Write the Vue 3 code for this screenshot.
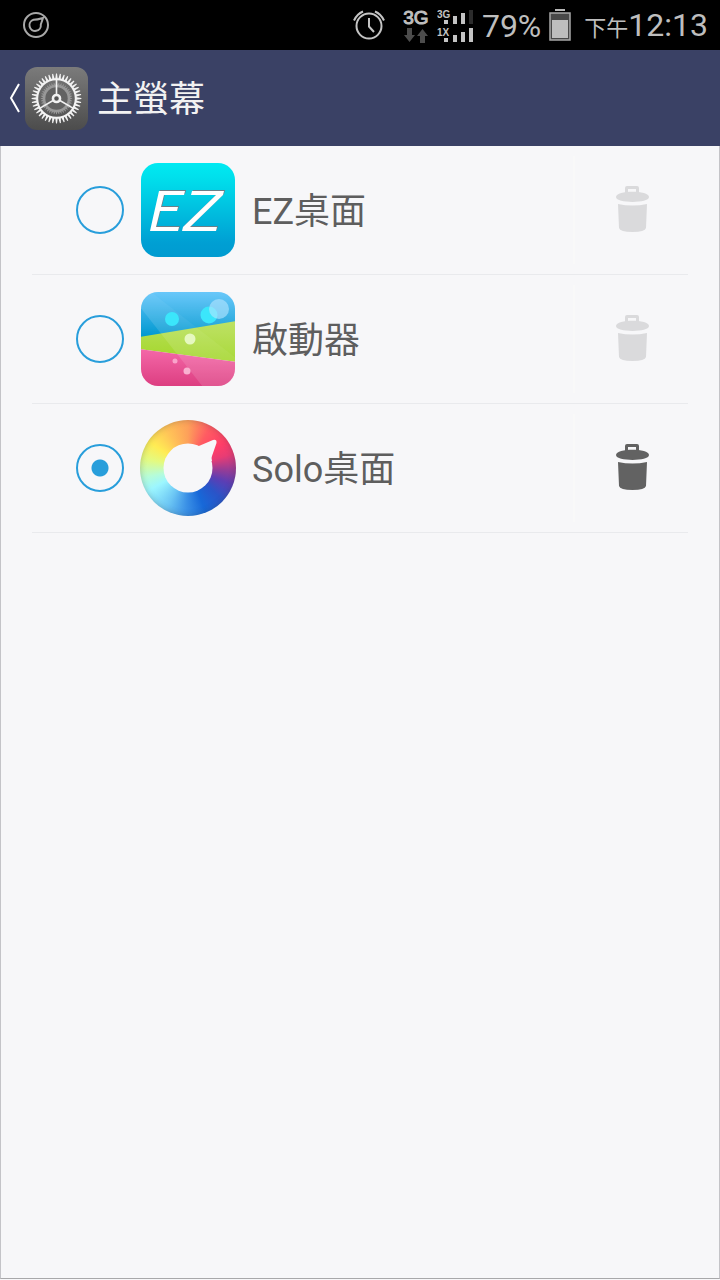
<template>
  <div class="screen">
    <header class="status-bar">
      <svg class="status-app" viewBox="0 0 28 28" aria-hidden="true">
        <circle cx="14" cy="14" r="12" />
        <path d="M21 7 L18.800 13.500 A5.700 5.700 0 1 1 11.500 8.800 Q15 8.800 21 7 Z" />
      </svg>

      <div class="status-icons">
        <svg class="icon-alarm" viewBox="0 0 34 34" aria-hidden="true">
          <circle cx="17" cy="18" r="12.500" />
          <path d="M17 10 V18.500 L22 24" />
          <path d="M2 12.500 Q5 6 11 3.500 M32 12.500 Q29 6 23 3.500" />
        </svg>

        <div class="network">
          <span class="network-type">3G</span>
          <svg class="icon-arrows" viewBox="0 0 26 15" aria-hidden="true">
            <path d="M4 0 H9 V7 H12 L6.500 14 L1 7 H4 Z" />
            <path d="M17 15 H22 V8 H25 L19.500 1 L14 8 H17 Z" />
          </svg>
        </div>

        <svg class="icon-signal" viewBox="0 0 38 38" aria-hidden="true">
          <text x="0" y="12">3G</text>
          <rect x="7" y="14" width="4" height="4" />
          <rect x="16" y="10" width="4" height="8" />
          <rect x="24" y="7" width="4" height="11" />
          <rect class="signal-off" x="32" y="4" width="4" height="14" />
          <text x="0" y="30">1X</text>
          <rect x="7" y="32" width="4" height="4" />
          <rect x="16" y="29" width="4" height="7" />
          <rect x="24" y="26" width="4" height="10" />
          <rect x="32" y="22" width="4" height="14" />
        </svg>

        <span class="status-text">79%</span>

        <svg class="icon-battery" viewBox="0 0 22 34" aria-hidden="true">
          <rect x="6" y="1" width="10" height="2" fill="#b8b8b8" />
          <rect x="1" y="5" width="20" height="27" fill="#484848" stroke="#a8a8a8" stroke-width="1.500" />
          <rect x="3" y="12" width="16" height="18" fill="#bebebe" />
        </svg>

        <span class="status-text clock"><span class="period">下午</span>12:13</span>
      </div>
    </header>

    <nav class="action-bar">
      <button type="button" class="back-button" aria-label="返回">
        <svg class="icon-back" viewBox="0 0 12 32" aria-hidden="true">
          <path d="M11 2 L3 16 L11 30" />
        </svg>
        <svg class="icon-settings" viewBox="0 0 62 62" aria-hidden="true">
          <defs>
            <linearGradient id="settings-bg" x1="0" y1="0" x2="0" y2="1">
              <stop offset="0" stop-color="#7b7b7b" />
              <stop offset="1" stop-color="#4c4c4c" />
            </linearGradient>
          </defs>
          <rect width="62" height="62" rx="12" fill="url(#settings-bg)" />
          <polygon :points="innerGear" fill="#989898" />
          <circle cx="31" cy="31" r="11" fill="#626262" />
          <path :d="outerGear" fill="#f2f2f2" fill-rule="evenodd" />
          <path d="M31 31 V12 M31 31 L14 41 M31 31 L48 41" stroke="#f2f2f2" stroke-width="1.600" />
          <circle cx="31" cy="31" r="3.500" fill="#555" stroke="#f2f2f2" stroke-width="2.500" />
        </svg>
      </button>
      <h1>主螢幕</h1>
    </nav>

    <main class="content">
      <ul class="launcher-list">
        <li v-for="item in launchers" :key="item.id" class="launcher-row">
          <label class="launcher-label">
            <input v-model="selected" type="radio" name="launcher" :value="item.id">

            <svg v-if="item.id === 'ez'" class="app-icon" viewBox="0 0 96 96" aria-hidden="true">
              <defs>
                <linearGradient id="ez-bg" x1="0" y1="0" x2="0" y2="1">
                  <stop offset="0" stop-color="#00eaf2" />
                  <stop offset="0.150" stop-color="#00e0ec" />
                  <stop offset="0.850" stop-color="#009fd3" />
                  <stop offset="1" stop-color="#009bd0" />
                </linearGradient>
              </defs>
              <rect x="1" y="1" width="94" height="94" rx="17" fill="url(#ez-bg)" />
              <path :d="ezMark" fill="#6c7f88" transform="translate(1 -1)" />
              <path :d="ezMark" fill="#fff" />
            </svg>

            <svg v-else-if="item.id === 'launcher'" class="app-icon" viewBox="0 0 96 96" aria-hidden="true">
              <defs>
                <linearGradient id="sky" x1="0" y1="0" x2="0" y2="1">
                  <stop offset="0" stop-color="#5ec4fb" />
                  <stop offset="1" stop-color="#0098cf" />
                </linearGradient>
                <linearGradient id="grass" x1="0" y1="0" x2="0" y2="1">
                  <stop offset="0" stop-color="#b8e058" />
                  <stop offset="1" stop-color="#a3d62a" />
                </linearGradient>
                <linearGradient id="rose" x1="0" y1="0" x2="0" y2="1">
                  <stop offset="0" stop-color="#f468a8" />
                  <stop offset="1" stop-color="#dc3d80" />
                </linearGradient>
                <clipPath id="tile">
                  <rect x="1" y="1" width="94" height="94" rx="17" />
                </clipPath>
              </defs>
              <g clip-path="url(#tile)">
                <rect width="96" height="46" fill="url(#sky)" />
                <path d="M0 46 L96 30 V71 L0 58 Z" fill="url(#grass)" />
                <path d="M0 58 L96 71 V96 H0 Z" fill="url(#rose)" />
                <path d="M0 0 H10 L96 67 V96 H63 L0 16 Z" fill="#fff" opacity="0.120" />
                <path d="M10 0 H96 V67 Z" fill="#fff" opacity="0.080" />
                <circle cx="32" cy="28" r="7" fill="#3be6fb" />
                <circle cx="69" cy="24" r="8.500" fill="#3be6fb" />
                <circle cx="79" cy="18" r="10" fill="#b8e6ff" opacity="0.600" />
                <circle cx="50" cy="48" r="5.500" fill="#e6f8c0" />
                <circle cx="35" cy="70" r="2.500" fill="#f9a4cb" />
                <circle cx="47" cy="80" r="3.500" fill="#f9b1d0" />
              </g>
            </svg>

            <span v-else class="app-icon color-ring" aria-hidden="true">
              <svg viewBox="0 0 96 96">
                <circle cx="48" cy="48" r="24.500" />
                <path d="M54 27 Q57 27 60 25.500 L73 20 Q77 19 76.500 23 L72 36 Q71 38 72 41 L48 48 Z" />
              </svg>
            </span>

            <span class="app-name">{{ item.name }}</span>
          </label>

          <button
            type="button"
            class="delete-button"
            :disabled="!item.removable"
            :aria-label="'刪除 ' + item.name"
            @click="removeLauncher(item.id)"
          >
            <svg viewBox="0 0 34 48" aria-hidden="true">
              <path d="M10 10 V3 Q10 1 12 1 H22 Q24 1 24 3 V10 H21 V4 H13 V10 Z" />
              <path d="M1 12 C1 5 34 5 34 12 C34 18.500 1 18.500 1 12 Z" />
              <path d="M3 19 Q17.500 22 32 19 L31 43 Q30 47 17.500 47 Q5 47 4 43 Z" />
            </svg>
          </button>
        </li>
      </ul>
    </main>
  </div>
</template>

<script setup>
import { ref } from 'vue'

const launchers = ref([
  { id: 'ez', name: 'EZ桌面', removable: false },
  { id: 'launcher', name: '啟動器', removable: false },
  { id: 'solo', name: 'Solo桌面', removable: true }
])

const selected = ref('solo')

const removeLauncher = (id) => {
  launchers.value = launchers.value.filter((item) => item.id !== id)
}

const ezMark = 'M19 29 H45 L44 33 H24 L21 45 H38 L37 49 H20 L16 65 H39 L38 69 H10 Z '
  + 'M52 29 H84 L83 33 L50 65 H77 L76 69 H42 L43 65 L76 33 H51 Z'

// blunt teeth around the icon centre, four points for each tooth
const gearPoints = (teeth, outer, root) => {
  const step = (Math.PI * 2) / teeth
  const corners = [[-0.36, root], [-0.13, outer], [0.13, outer], [0.36, root]]
  const points = []
  for (let i = 0; i < teeth; i++) {
    corners.forEach(([shift, r]) => {
      const angle = (i + shift) * step - Math.PI / 2
      points.push(`${(31 + r * Math.cos(angle)).toFixed(2)},${(31 + r * Math.sin(angle)).toFixed(2)}`)
    })
  }
  return points.join(' ')
}

const innerGear = gearPoints(40, 15.5, 13.5)
const outerGear = `M${gearPoints(40, 24.5, 20)} Z M13 31 a18 18 0 1 0 36 0 a18 18 0 1 0 -36 0 Z`
</script>

<style>
body {
  margin: 0;
  background: #f7f7f9;
}
</style>

<style scoped>
.screen {
  display: flex;
  flex-direction: column;
  min-height: 100vh;
  box-sizing: border-box;
  padding-bottom: 1px;
  font-family: Roboto, "Noto Sans CJK TC", sans-serif;
}

.status-bar {
  display: flex;
  justify-content: space-between;
  align-items: center;
  height: 50px;
  padding: 0 12px 0 22px;
  background: #000;
  color: #bebebe;
}

.status-app {
  width: 28px;
  height: 28px;
  fill: none;
  stroke: #a8a8a8;
  stroke-width: 2;
}

.status-icons {
  display: flex;
  align-items: center;
}

.icon-alarm {
  width: 34px;
  height: 34px;
  margin-right: 16px;
  fill: none;
  stroke: #c4c4c4;
  stroke-width: 2;
}

.network {
  display: flex;
  flex-direction: column;
  align-items: center;
  width: 28px;
  margin-right: 7px;
}

.network-type {
  font-family: "Liberation Sans", sans-serif;
  font-size: 19px;
  line-height: 20px;
  -webkit-text-stroke: 1px #bebebe;
}

.icon-arrows {
  width: 26px;
  height: 15px;
  fill: #4c4c4c;
}

.icon-signal {
  width: 38px;
  height: 38px;
  margin-right: 7px;
  fill: #c4c4c4;
}

.icon-signal text {
  font-family: "Liberation Sans", sans-serif;
  font-size: 10px;
  font-weight: 700;
}

.icon-signal .signal-off {
  fill: #2c2c2c;
}

.status-text {
  padding-top: 2px;
  font-size: 32px;
  line-height: 48px;
}

.clock {
  padding-top: 3px;
}

.icon-battery {
  width: 22px;
  height: 34px;
  margin: 0 13px 0 8px;
}

.period {
  font-size: 22px;
}

.action-bar {
  display: flex;
  align-items: center;
  height: 96px;
  padding-left: 8px;
  background: #3a4165;
}

.back-button {
  display: flex;
  align-items: center;
  gap: 5px;
  padding: 0;
  border: none;
  background: none;
  cursor: pointer;
}

.icon-back {
  width: 12px;
  height: 32px;
  fill: none;
  stroke: #fff;
  stroke-width: 2;
}

.icon-settings {
  width: 63px;
  height: 63px;
}

h1 {
  margin: 0 0 0 9px;
  padding-top: 4px;
  color: #f2f2f2;
  font-size: 36px;
  font-weight: 400;
  line-height: 48px;
}

.content {
  flex: 1;
  border: 1px solid #c4c4c8;
  border-top: none;
  border-bottom-color: #a8a8aa;
  background: #f7f7f9;
}

.launcher-list {
  margin: 0;
  padding: 0 31px;
  list-style: none;
}

.launcher-row {
  display: flex;
  align-items: center;
  height: 128px;
  border-bottom: 1px solid #e9eaed;
}

.launcher-label {
  display: flex;
  flex: 1;
  align-items: center;
  gap: 16px;
  padding-left: 44px;
  cursor: pointer;
}

input[type="radio"] {
  appearance: none;
  box-sizing: border-box;
  width: 48px;
  height: 48px;
  margin: 0;
  border: 2px solid #289edb;
  border-radius: 50%;
  cursor: pointer;
}

input[type="radio"]:checked {
  background: radial-gradient(circle, #289edb 8px, transparent 9px);
}

.app-icon {
  display: block;
  flex: none;
  width: 96px;
  height: 96px;
}

.color-ring {
  border-radius: 50%;
  background: conic-gradient(
    #fda05a 0deg,
    #ff5c62 28deg,
    #ff3e68 55deg,
    #e83c74 72deg,
    #9a3c94 92deg,
    #5c3eb4 110deg,
    #2a54c8 132deg,
    #1768d8 158deg,
    #3a90e6 182deg,
    #6cc6f4 208deg,
    #9cf6ff 240deg,
    #b6fcd8 258deg,
    #e4fa80 282deg,
    #ffec54 304deg,
    #ffc258 332deg,
    #fda05a 360deg
  );
  box-shadow: inset 0 0 6px rgba(60, 60, 60, 0.3);
}

.color-ring svg {
  display: block;
  fill: #f7f7f9;
}

.app-name {
  padding-top: 4px;
  color: #5e5e5e;
  font-size: 36px;
  line-height: 48px;
}

.delete-button {
  display: flex;
  justify-content: center;
  align-items: center;
  width: 115px;
  height: 108px;
  padding: 0 0 2px;
  border: none;
  border-left: 2px solid #f9f9f9;
  background: none;
  cursor: pointer;
}

.delete-button svg {
  width: 34px;
  height: 48px;
  fill: #626262;
}

.delete-button:disabled {
  cursor: default;
}

.delete-button:disabled svg {
  fill: #dadadc;
}
</style>
